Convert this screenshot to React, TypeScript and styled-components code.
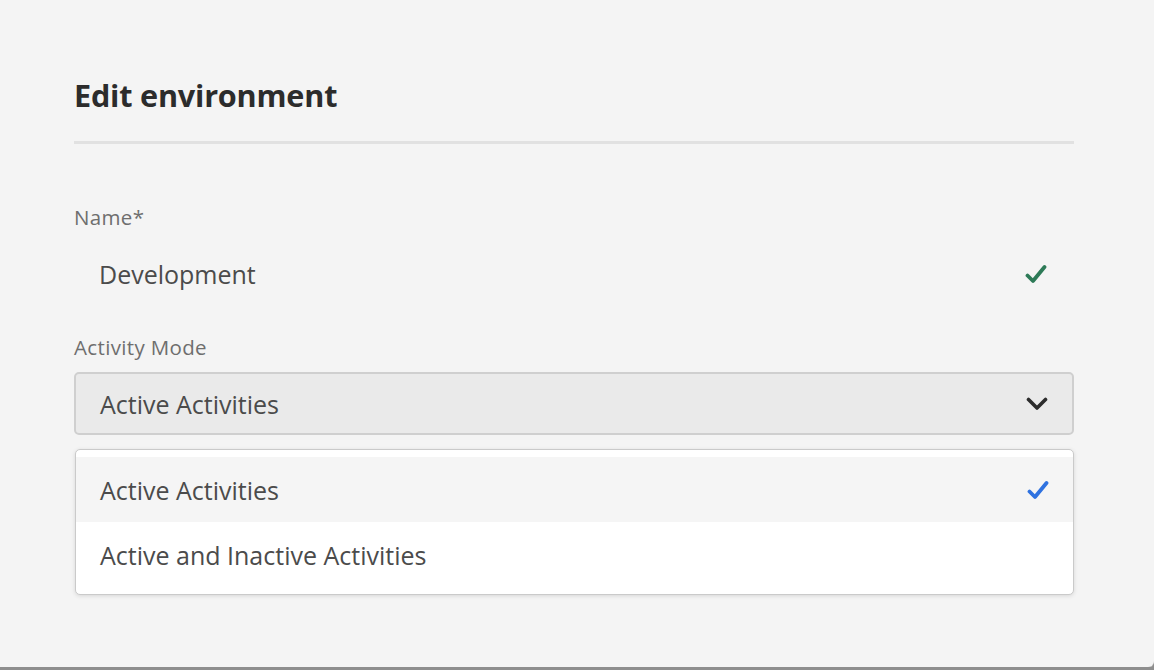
import React from "react";
import styled, { createGlobalStyle } from "styled-components";

const Global = createGlobalStyle`
  html, body { margin: 0; padding: 0; background: #8e8e8e; }
  body { font-family: "Open Sans", "Noto Sans", sans-serif; -webkit-font-smoothing: antialiased; }
  * { box-sizing: border-box; }
`;

const Panel = styled.div`
  width: 1154px;
  height: 667px;
  background: #f4f4f4;
  border-bottom-right-radius: 6px;
  box-shadow: 0 1px 0 #b4b4b4;
  padding: 75px 80px 0 74px;
`;

const Content = styled.div`
  width: 1000px;
  display: flex;
  flex-direction: column;
`;

const Heading = styled.h1`
  margin: 0;
  font-size: 30.6px;
  line-height: 40px;
  font-weight: 700;
  color: #2c2c2c;
  letter-spacing: -0.2px;
`;

const Divider = styled.hr`
  margin: 26px 0 0;
  border: none;
  height: 3px;
  background: #e1e1e1;
`;

const Label = styled.label<{ $top: number }>`
  display: block;
  margin-top: ${(p) => p.$top}px;
  font-size: 20.5px;
  line-height: 24px;
  letter-spacing: 0.35px;
  color: #6e6e6e;
`;

const TextRow = styled.div`
  margin-top: 15px;
  height: 60px;
  display: flex;
  align-items: center;
  justify-content: space-between;
  padding: 0 27px 0 25px;
  font-size: 25px;
  color: #4b4b4b;
`;

const Select = styled.div`
  margin-top: 13px;
  height: 63px;
  display: flex;
  align-items: center;
  justify-content: space-between;
  padding: 0 24px 0 24px;
  background: #eaeaea;
  border: 2px solid #cfcfcf;
  border-radius: 5px;
  font-size: 25px;
  color: #4b4b4b;
`;

const Popover = styled.div`
  margin-top: 14px;
  margin-left: 1px;
  width: 999px;
  padding: 7px 0;
  background: #ffffff;
  border: 1.5px solid #cacaca;
  border-radius: 5px;
  box-shadow: 0 1px 4px rgba(0, 0, 0, 0.12);
  display: flex;
  flex-direction: column;
`;

const Option = styled.div<{ $active?: boolean }>`
  height: 65px;
  display: flex;
  align-items: center;
  justify-content: space-between;
  padding: 0 24px 0 24px;
  background: ${(p) => (p.$active ? "#f5f5f5" : "#ffffff")};
  font-size: 25px;
  color: #4b4b4b;
`;

const Check = ({ color }: { color: string }) => (
  <svg width="22" height="20" viewBox="0 0 22 20" fill="none">
    <path
      d="M2.5 11.5 L8 17 L19.5 3"
      stroke={color}
      strokeWidth="3.8"
      strokeLinecap="round"
      strokeLinejoin="round"
    />
  </svg>
);

const Chevron = () => (
  <svg width="22" height="14" viewBox="0 0 22 14" fill="none">
    <path
      d="M2.5 2.5 L11 11 L19.5 2.5"
      stroke="#2c2c2c"
      strokeWidth="3.6"
      strokeLinecap="round"
      strokeLinejoin="round"
    />
  </svg>
);

export default function App() {
  return (
    <>
      <Global />
      <Panel>
        <Content>
          <Heading>Edit environment</Heading>
          <Divider />
          <Label $top={61}>Name*</Label>
          <TextRow>
            <span>Development</span>
            <Check color="#2d7a57" />
          </TextRow>
          <Label $top={31}>Activity Mode</Label>
          <Select>
            <span>Active Activities</span>
            <Chevron />
          </Select>
          <Popover>
            <Option $active>
              <span>Active Activities</span>
              <Check color="#2f72e0" />
            </Option>
            <Option>
              <span>Active and Inactive Activities</span>
            </Option>
          </Popover>
        </Content>
      </Panel>
    </>
  );
}
